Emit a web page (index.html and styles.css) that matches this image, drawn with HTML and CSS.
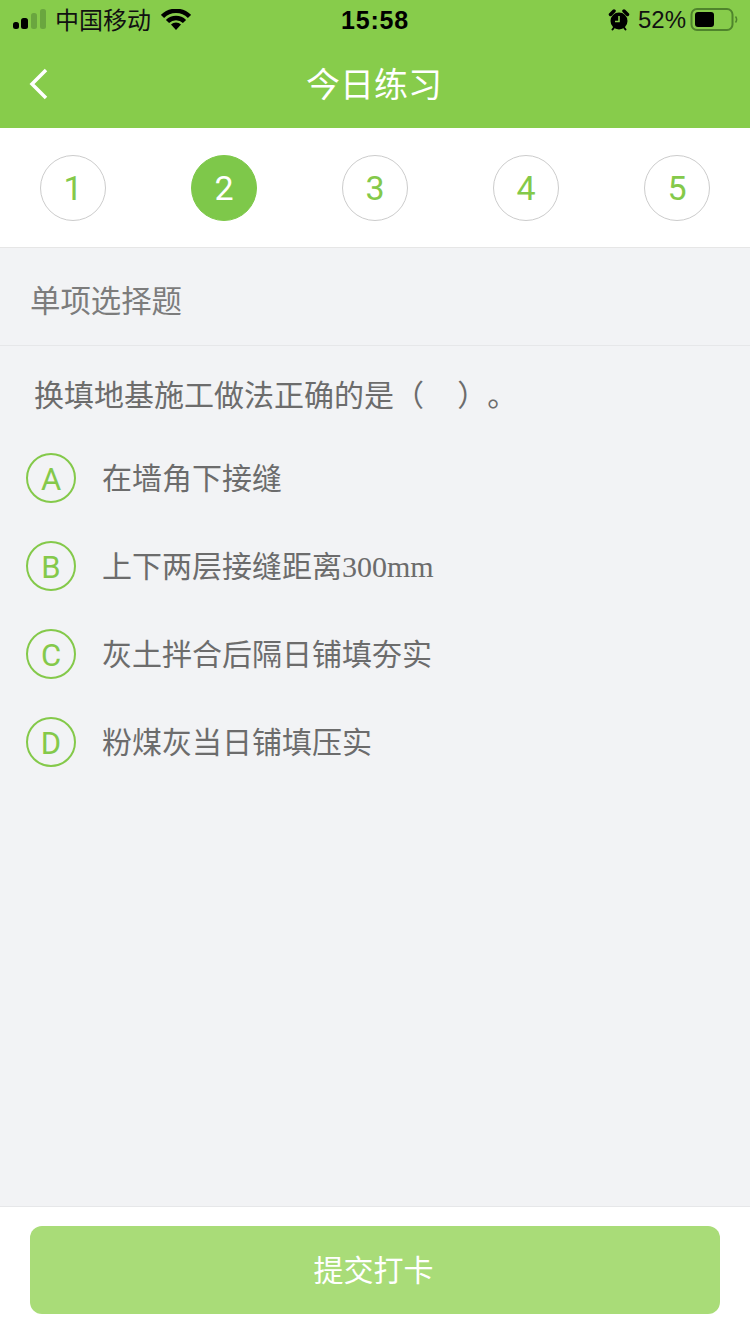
FILE: index.html
```html
<!DOCTYPE html>
<html lang="zh-CN">
<head>
    <meta charset="UTF-8">
    <meta name="viewport" content="width=device-width, initial-scale=1.0">
    <title>今日练习</title>
    <link rel="stylesheet" href="styles.css">
</head>
<body>

<header class="top">
    <div class="status">
        <div class="status-left">
            <svg class="signal" width="34" height="22" viewBox="0 0 34 22">
                <rect x="0" y="13" width="6" height="7" rx="2.500" fill="#000"/>
                <rect x="8" y="9" width="7" height="11" rx="2.500" fill="#000"/>
                <rect x="18" y="4" width="6" height="16" rx="2.500" fill="#6aa63f"/>
                <rect x="27" y="0" width="6" height="20" rx="2.500" fill="#6aa63f"/>
            </svg>
            <span class="carrier">中国移动</span>
            <svg class="wifi" width="30" height="22" viewBox="0 0 30 22">
                <path d="M1.500 7.500 A19 19 0 0 1 28.500 7.500" fill="none" stroke="#000" stroke-width="4.500"/>
                <path d="M6.500 12.500 A12 12 0 0 1 23.500 12.500" fill="none" stroke="#000" stroke-width="4.500"/>
                <path d="M10 15.500 A7 7 0 0 1 20 15.500 L15 21 Z" fill="#000"/>
            </svg>
        </div>
        <span class="clock">15:58</span>
        <div class="status-right">
            <svg class="alarm" width="22" height="22" viewBox="0 0 22 22">
                <circle cx="11" cy="12" r="8.500" fill="#000"/>
                <path d="M2.500 5.500 L6 2 M16 2 L19.500 5.500" stroke="#000" stroke-width="3.500" stroke-linecap="round"/>
                <path d="M4.500 20.500 L6 18.500 M17.500 20.500 L16 18.500" stroke="#000" stroke-width="2" stroke-linecap="round"/>
                <path d="M11 7 V12.500 H7" fill="none" stroke="#88cd4c" stroke-width="1.600"/>
            </svg>
            <span class="percent">52%</span>
            <svg class="battery" width="48" height="24" viewBox="0 0 48 24">
                <rect x="1.500" y="1" width="41" height="21" rx="5.500" fill="none" stroke="#4f842c" stroke-width="2"/>
                <rect x="5" y="4" width="19" height="15" rx="3" fill="#000"/>
                <path d="M45.500 8.500 A5 5 0 0 1 45.500 14.500" fill="none" stroke="#4f842c" stroke-width="1.500"/>
            </svg>
        </div>
    </div>
    <div class="navbar">
        <svg class="back" width="20" height="32" viewBox="0 0 20 32">
            <path d="M17 2 L3 16 L17 30" fill="none" stroke="#fff" stroke-width="3.500"/>
        </svg>
        <h1>今日练习</h1>
    </div>
</header>

<nav class="steps">
    <span class="step">1</span>
    <span class="step active">2</span>
    <span class="step">3</span>
    <span class="step">4</span>
    <span class="step">5</span>
</nav>

<main class="main">
    <div class="qtype">单项选择题</div>
    <p class="question">换填地基施工做法正确的是（&nbsp;&nbsp;&nbsp;&nbsp;）。</p>
    <ul class="options">
        <li class="option"><span class="letter">A</span><span class="option-text">在墙角下接缝</span></li>
        <li class="option"><span class="letter">B</span><span class="option-text">上下两层接缝距离<span class="serif">300mm</span></span></li>
        <li class="option"><span class="letter">C</span><span class="option-text">灰土拌合后隔日铺填夯实</span></li>
        <li class="option"><span class="letter">D</span><span class="option-text">粉煤灰当日铺填压实</span></li>
    </ul>
</main>

<footer class="bottom">
    <button class="submit">提交打卡</button>
</footer>

</body>
</html>
```

FILE: styles.css
```css
* {
    box-sizing: border-box;
}

html, body {
    height: 100%;
}

body {
    margin: 0;
    display: flex;
    flex-direction: column;
    height: 1334px;
    overflow: hidden;
    background-color: #f2f3f5;
    color: #666;
    font-family: "Liberation Sans", "Noto Sans CJK SC", sans-serif;
    text-spacing-trim: space-all;
}

.top {
    height: 128px;
    background-color: #87cc4b;
}

.status {
    height: 40px;
    display: flex;
    justify-content: space-between;
    align-items: center;
    padding: 0 12px 0 13px;
    position: relative;
    color: #000;
}

.status-left, .status-right {
    display: flex;
    align-items: center;
}

.carrier {
    margin-left: 8px;
    padding-bottom: 3px;
    font-size: 24px;
    color: #111;
}

.wifi {
    margin-left: 10px;
}

.clock {
    position: absolute;
    left: 0;
    right: 0;
    text-align: center;
    font-size: 25px;
    font-weight: bold;
    font-family: "Liberation Sans", sans-serif;
    letter-spacing: 0.800px;
}

.percent {
    margin: 0 4px 0 8px;
    font-size: 24px;
    color: #111;
}

.navbar {
    height: 88px;
    display: flex;
    align-items: center;
    justify-content: center;
    position: relative;
    padding: 0 2px 4px 0;
}

.back {
    position: absolute;
    left: 29px;
    top: 28px;
}

h1 {
    margin: 0;
    color: #fff;
    font-size: 34px;
    font-weight: normal;
}

.steps {
    height: 120px;
    display: flex;
    justify-content: space-between;
    align-items: center;
    padding: 1px 40px 0;
    background-color: #fff;
    border-bottom: 1px solid #e6e6e6;
}

.step {
    width: 66px;
    height: 66px;
    display: flex;
    align-items: center;
    justify-content: center;
    border: 1px solid #ccc;
    border-radius: 50%;
    color: #84c94a;
    font-family: Roboto, sans-serif;
    font-size: 34px;
}

.step.active {
    background-color: #7ec84a;
    border-color: #7ec84a;
    color: #fff;
}

.main {
    flex: 1;
}

.qtype {
    height: 98px;
    display: flex;
    align-items: center;
    padding: 4px 0 0 30px;
    border-bottom: 1px solid #e6e7e9;
    color: #7c7c7c;
    font-size: 30.400px;
}

.question {
    margin: 0;
    padding: 30px 0 0 34px;
    height: 88px;
    font-size: 30px;
    line-height: 40px;
    color: #6c6c6c;
}

.options {
    list-style: none;
    margin: 0;
    padding: 0 0 0 26px;
}

.option {
    height: 88px;
    display: flex;
    align-items: center;
    gap: 26px;
    font-size: 30px;
    color: #6c6c6c;
}

.option-text {
    padding-bottom: 4px;
}

.letter {
    width: 50px;
    height: 50px;
    display: flex;
    align-items: center;
    justify-content: center;
    padding-top: 2px;
    border: 2px solid #84c94a;
    border-radius: 50%;
    color: #84c94a;
    font-family: Roboto, sans-serif;
    font-size: 31px;
}

.serif {
    font-family: "Liberation Serif", serif;
    font-size: 30px;
}

.bottom {
    height: 128px;
    padding: 19px 30px 0;
    background-color: #fff;
    border-top: 1px solid #e6e7e9;
}

.submit {
    display: block;
    width: 100%;
    height: 88px;
    padding: 0 3px 4px 0;
    border: none;
    border-radius: 12px;
    background-color: #a9dc78;
    color: #fff;
    font-family: inherit;
    font-size: 30px;
}
```
